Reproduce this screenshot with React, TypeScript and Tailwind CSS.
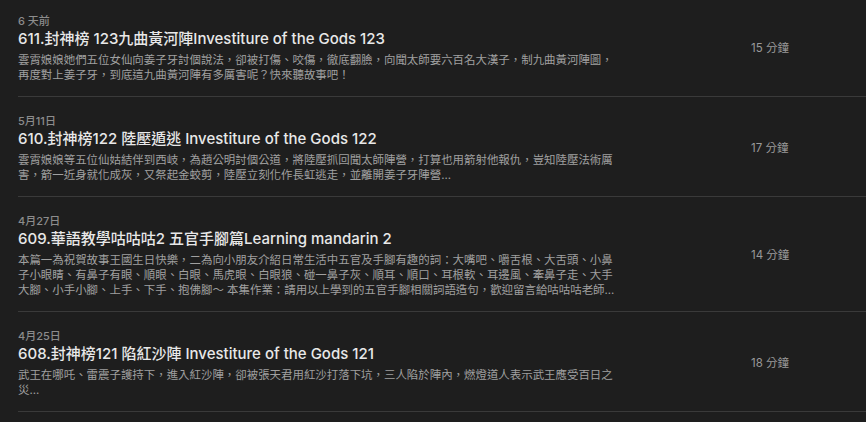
const episodes = [
  {
    date: "6 天前",
    title: "611.封神榜 123九曲黃河陣Investiture of the Gods 123",
    desc: "雲霄娘娘她們五位女仙向姜子牙討個說法，卻被打傷、咬傷，徹底翻臉，向聞太師要六百名大漢子，制九曲黃河陣圖，再度對上姜子牙，到底這九曲黃河陣有多厲害呢？快來聽故事吧！",
    duration: "15 分鐘",
  },
  {
    date: "5月11日",
    title: "610.封神榜122 陸壓遁逃 Investiture of the Gods 122",
    desc: "雲霄娘娘等五位仙姑結伴到西岐，為趙公明討個公道，將陸壓抓回聞太師陣營，打算也用箭射他報仇，豈知陸壓法術厲害，箭一近身就化成灰，又祭起金蛟剪，陸壓立刻化作長虹逃走，並離開姜子牙陣營...",
    duration: "17 分鐘",
  },
  {
    date: "4月27日",
    title: "609.華語教學咕咕咕2 五官手腳篇Learning mandarin 2",
    desc: "本篇一為祝賀故事王國生日快樂，二為向小朋友介紹日常生活中五官及手腳有趣的詞：大嘴吧、嚼舌根、大舌頭、小鼻子小眼睛、有鼻子有眼、順眼、白眼、馬虎眼、白眼狼、碰一鼻子灰、順耳、順口、耳根軟、耳邊風、牽鼻子走、大手大腳、小手小腳、上手、下手、抱佛腳～ 本集作業：請用以上學到的五官手腳相關詞語造句，歡迎留言給咕咕咕老師...",
    duration: "14 分鐘",
  },
  {
    date: "4月25日",
    title: "608.封神榜121 陷紅沙陣 Investiture of the Gods 121",
    desc: "武王在哪吒、雷震子護持下，進入紅沙陣，卻被張天君用紅沙打落下坑，三人陷於陣內，燃燈道人表示武王應受百日之災...",
    duration: "18 分鐘",
  },
];

export default function App() {
  return (
    <div
      className="min-h-[422px] w-full overflow-hidden bg-[#1e1e1e] pl-[18px]"
      style={{ fontFamily: 'Inter, "Noto Sans CJK TC", sans-serif' }}
    >
      {episodes.map((ep, i) => (
        <div
          key={ep.title}
          className={`flex items-center border-b border-[#3a3a3a] ${i === 0 ? "pt-[14px]" : "pt-[17px]"} pb-[13px]`}
        >
          <div className="w-[604px] shrink-0">
            <div className="text-[11px] leading-[14px] font-medium text-[#8c8c8c]">{ep.date}</div>
            <div className="mt-px text-[15px] leading-5 font-medium whitespace-nowrap text-[#e8e8e8]">
              {ep.title}
            </div>
            <p className="mt-1 text-[11.45px] leading-[15px] text-[#a0a0a0]">{ep.desc}</p>
          </div>
          <div className="pl-[129px] text-[11.5px] text-[#9a9a9a] whitespace-nowrap">{ep.duration}</div>
        </div>
      ))}
    </div>
  );
}
